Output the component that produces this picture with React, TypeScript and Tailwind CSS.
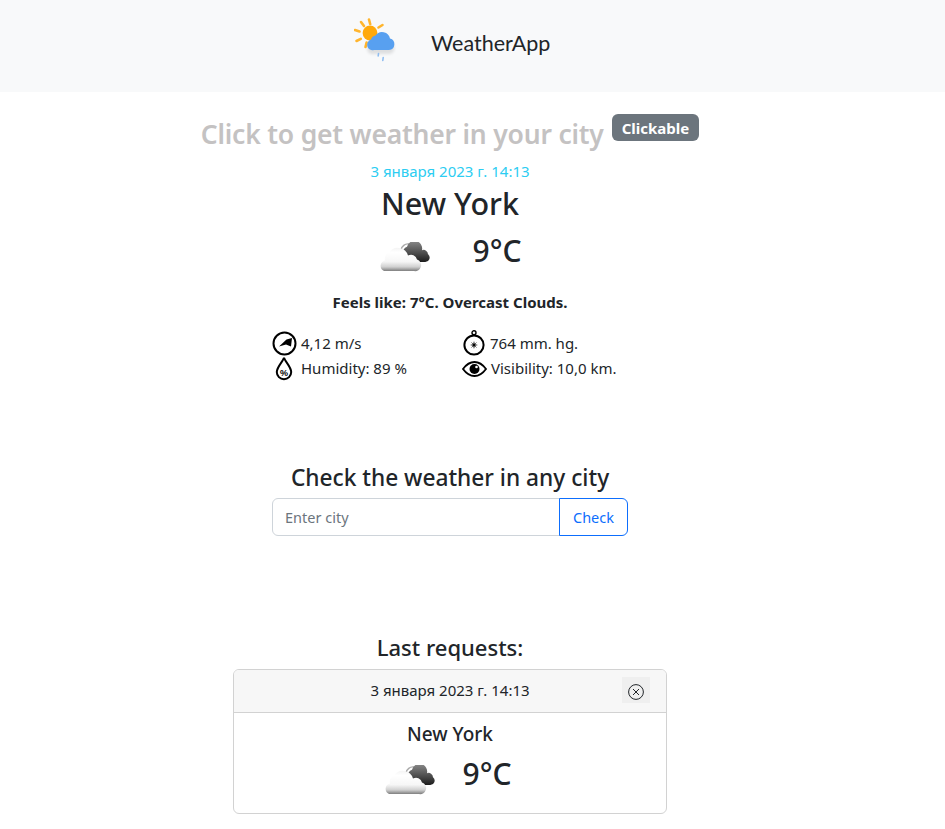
import React from 'react';

const sans = "font-['Noto_Sans','Open_Sans',sans-serif]";

function LogoIcon() {
  return (
    <svg width="42" height="46" viewBox="0 0 42 46" className="block">
      <defs>
        <filter id="logoBlur" x="-20%" y="-20%" width="140%" height="150%">
          <feGaussianBlur stdDeviation="1.6" />
        </filter>
      </defs>
      <g stroke="#ffb52e" strokeWidth="2.6" strokeLinecap="round">
        <path d="M15 1.5 L16.2 6" />
        <path d="M7 4 L10 8" />
        <path d="M1 12 L5.5 13.5" />
        <path d="M2.5 23 L6.8 20.8" />
        <path d="M11.5 29 L12.6 24.5" />
        <path d="M24.5 9.5 L28.5 7" />
      </g>
      <circle cx="16" cy="15" r="7.4" fill="#ffa90a" />
      <path d="M20 34 h15 a5.8 5.8 0 0 0 1 -11.4 a8 8 0 0 0 -14.5 -3 a6 6 0 0 0 -4.5 4 a5.4 5.4 0 0 0 3 10.4 z" fill="#000" opacity="0.1" filter="url(#logoBlur)" transform="translate(0 2)" />
      <path d="M20 32 h15 a5.8 5.8 0 0 0 1 -11.4 a8 8 0 0 0 -14.5 -3 a6 6 0 0 0 -4.5 4 a5.4 5.4 0 0 0 3 10.4 z" fill="#58a0f0" />
      <g stroke="#8fbdf0" strokeWidth="1.6" strokeLinecap="round">
        <path d="M24.5 35.5 L24.2 38" />
        <path d="M29.2 39.5 L28.8 42.5" />
      </g>
    </svg>
  );
}

function CloudIcon() {
  return (
    <svg width="52" height="30" viewBox="0 0 52 30" className="block">
      <defs>
        <linearGradient id="darkCloud" x1="0" y1="0" x2="0" y2="1">
          <stop offset="0" stopColor="#8a8a8a" />
          <stop offset="0.6" stopColor="#4a4a4a" />
          <stop offset="1" stopColor="#1c1c1c" />
        </linearGradient>
        <linearGradient id="lightCloud" x1="0" y1="0" x2="0" y2="1">
          <stop offset="0" stopColor="#f4f4f4" />
          <stop offset="0.2" stopColor="#ffffff" />
          <stop offset="0.6" stopColor="#f6f6f6" />
          <stop offset="0.82" stopColor="#d0d0d0" />
          <stop offset="1" stopColor="#7c7c7c" />
        </linearGradient>
      </defs>
      <path d="M23 8 a7 7 0 0 1 8 -6" fill="none" stroke="#a8a8a8" strokeWidth="1.4" />
      <path d="M30 20 h17 a4.4 4.4 0 0 0 3 -7.8 a4.4 4.4 0 0 0 -6 -4 a7.6 7.6 0 0 0 -15 -3.4 a6 6 0 0 0 -4 7 z" fill="url(#darkCloud)" />
      <path d="M6 29 h30 a6 6 0 0 0 3 -11.6 a6 6 0 0 0 -9 -3.8 a10.5 10.5 0 0 0 -19 -3 a7 7 0 0 0 -4 7.8 a5.6 5.6 0 0 0 -1 10.6 z" fill="url(#lightCloud)" />
    </svg>
  );
}

function WindIcon() {
  return (
    <svg width="25" height="25" viewBox="0 0 25 25" className="block shrink-0">
      <circle cx="12.5" cy="12.5" r="11" fill="none" stroke="#000" strokeWidth="2" />
      <path d="M7 15.5 L14.5 8.5 L20 7 L19 15.5 L14 13.5 z" fill="#000" />
    </svg>
  );
}

function HumidityIcon() {
  return (
    <svg width="20" height="25" viewBox="0 0 20 25" className="block shrink-0">
      <path d="M10 1.5 C9.6 5 3 10.5 2.8 16 a7.2 7.2 0 0 0 14.4 0 C17 10.5 10.4 5 10 1.5 z" fill="none" stroke="#000" strokeWidth="2" />
      <text x="10" y="19.5" textAnchor="middle" fontSize="9" fontWeight="700" fontFamily="Liberation Sans" fill="#000">%</text>
    </svg>
  );
}

function CompassIcon() {
  return (
    <svg width="22" height="26" viewBox="0 0 22 26" className="block shrink-0">
      <circle cx="11" cy="2.8" r="2" fill="none" stroke="#000" strokeWidth="1.4" />
      <circle cx="11" cy="15" r="9.6" fill="none" stroke="#000" strokeWidth="2" />
      <path d="M11 11 L11.8 14.2 L15 15 L11.8 15.8 L11 19 L10.2 15.8 L7 15 L10.2 14.2 z" fill="#000" />
      <path d="M8.5 12.5 L13.5 17.5 M13.5 12.5 L8.5 17.5" stroke="#000" strokeWidth="0.6" />
    </svg>
  );
}

function EyeIcon() {
  return (
    <svg width="25" height="16" viewBox="0 0 25 16" className="block shrink-0">
      <path d="M1 8 C5 2.5 9 1 12.5 1 S20 2.5 24 8 C20 13.5 16 15 12.5 15 S5 13.5 1 8 z" fill="none" stroke="#000" strokeWidth="1.8" />
      <circle cx="12.5" cy="8" r="5" fill="#000" />
      <circle cx="14.5" cy="6" r="1.3" fill="#fff" />
    </svg>
  );
}

function CloseIcon() {
  return (
    <svg width="16" height="16" viewBox="0 0 16 16" className="block">
      <circle cx="8" cy="8" r="7.4" fill="none" stroke="#212529" strokeWidth="1" />
      <path d="M5 5 L11 11 M11 5 L5 11" stroke="#212529" strokeWidth="1" />
    </svg>
  );
}

export default function App() {
  return (
    <div className={`${sans} min-h-[829px] bg-white text-[#212529]`}>
      <nav className="h-[92px] bg-[#f8f9fa]">
        <div className="w-[900px] h-full flex items-start">
          <div className="ml-[354px] mt-[18px]">
            <LogoIcon />
          </div>
          <span className="ml-[35px] mt-[28px] font-['Lato',sans-serif] text-[21.5px] leading-[30px] text-[#212529]">WeatherApp</span>
        </div>
      </nav>

      <main className="w-[900px] flex flex-col items-center">
        <div className="mt-[22px] flex items-start">
          <h3 className="mt-[3px] text-[26.5px] leading-[34px] font-semibold text-[#c4c2c2] tracking-[-0.2px]">Click to get weather in your city</h3>
          <span className="ml-[8px] h-[27px] px-[10px] rounded-[6px] bg-[#6c757d] text-white text-[15px] leading-[28px] font-bold">Clickable</span>
        </div>
        <div className="mt-[10px] text-[15px] leading-[21px] text-[#2ccdf2]">3 января 2023 г. 14:13</div>
        <h2 className="mt-[3px] text-[30.5px] leading-[36px] font-medium">New York</h2>
        <div className="mt-[9px] flex items-center">
          <div className="mt-[12px]"><CloudIcon /></div>
          <span className="ml-[42px] text-[30px] leading-[36px] font-medium">9°C</span>
        </div>
        <div className="mt-[20px] text-[15px] leading-[21px] font-bold">Feels like: 7°C. Overcast Clouds.</div>

        <div className="mt-[17px] w-[356px] grid grid-cols-[190px_1fr] text-[15px] leading-[24px]">
          <div className="flex items-center gap-[4px]"><WindIcon /><span>4,12 m/s</span></div>
          <div className="flex items-center gap-[5px] pl-[1px]"><CompassIcon /><span>764 mm. hg.</span></div>
          <div className="flex items-center gap-[7px] pl-[2px]"><HumidityIcon /><span className="-mt-[2px]">Humidity: 89 %</span></div>
          <div className="flex items-center gap-[4px]"><EyeIcon /><span className="-mt-[2px]">Visibility: 10,0 km.</span></div>
        </div>

        <h4 className="mt-[82px] text-[22.7px] leading-[30px] font-medium">Check the weather in any city</h4>
        <div className="mt-[5px] w-[356px] flex h-[38px]">
          <input
            placeholder="Enter city"
            className="flex-1 min-w-0 px-[12px] pt-[1px] border border-[#ced4da] rounded-l-[6px] text-[14.5px] outline-none placeholder:text-[#6c757d]"
          />
          <button className="-ml-px w-[69px] pt-[1px] border border-[#0d6efd] rounded-r-[6px] text-[#0d6efd] text-[14.5px]">Check</button>
        </div>

        <h4 className="mt-[96px] text-[22px] leading-[30px] font-medium">Last requests:</h4>
        <div className="mt-[7px] w-[434px] border border-[#d2d2d2] rounded-[6px] overflow-hidden">
          <div className="relative h-[43px] bg-[#f7f7f7] border-b border-[#d2d2d2] flex items-center justify-center text-[15px]">
            <span className="-mt-[1px]">3 января 2023 г. 14:13</span>
            <button className="absolute right-[16px] top-[7px] w-[28px] h-[26px] pt-[3px] bg-[#efefef] flex items-center justify-center">
              <CloseIcon />
            </button>
          </div>
          <div className="h-[100px] flex flex-col items-center">
            <div className="mt-[8px] text-[19px] leading-[27px] font-medium">New York</div>
            <div className="mt-[5px] flex items-center pr-[5px]">
              <div className="mt-[12px]"><CloudIcon /></div>
              <span className="ml-[27px] text-[30px] leading-[36px] font-medium">9°C</span>
            </div>
          </div>
        </div>
      </main>
    </div>
  );
}
